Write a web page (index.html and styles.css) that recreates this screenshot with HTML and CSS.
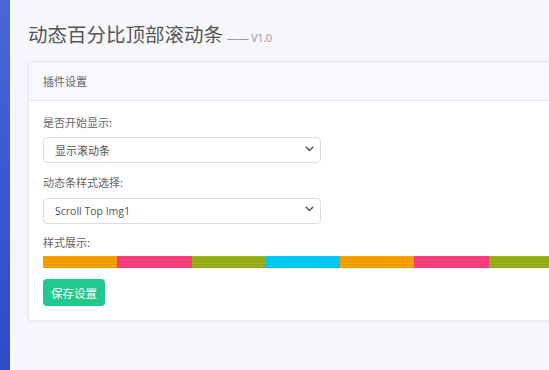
FILE: index.html
```html
<!DOCTYPE html>
<html lang="zh">
<head>
<meta charset="utf-8">
<title>动态百分比顶部滚动条</title>
<link rel="stylesheet" href="styles.css">
</head>
<body>
<div class="layout">
  <aside class="sidebar"></aside>
  <main class="main">
    <h1 class="page-title">动态百分比顶部滚动条<small class="version">—— V1.0</small></h1>
    <section class="card">
      <div class="card-header">插件设置</div>
      <div class="card-body">
        <label class="field-label">是否开始显示:</label>
        <div class="select-wrap">
          <select class="select"><option>显示滚动条</option></select>
          <svg class="chevron" width="9" height="6" viewBox="0 0 9 6"><path d="M1.2 1.2 L4.5 4.5 L7.8 1.2" fill="none" stroke="#5c5c66" stroke-width="1.6" stroke-linecap="round" stroke-linejoin="round"/></svg>
        </div>
        <label class="field-label">动态条样式选择:</label>
        <div class="select-wrap">
          <select class="select latin"><option>Scroll Top Img1</option></select>
          <svg class="chevron" width="9" height="6" viewBox="0 0 9 6"><path d="M1.2 1.2 L4.5 4.5 L7.8 1.2" fill="none" stroke="#5c5c66" stroke-width="1.6" stroke-linecap="round" stroke-linejoin="round"/></svg>
        </div>
        <label class="field-label">样式展示:</label>
        <div class="preview-bar">
          <span class="seg orange"></span><span class="seg pink"></span><span class="seg green"></span><span class="seg cyan"></span><span class="seg orange"></span><span class="seg pink"></span><span class="seg green"></span><span class="seg cyan"></span>
        </div>
        <button class="btn-save">保存设置</button>
      </div>
    </section>
  </main>
</div>
</body>
</html>
```

FILE: styles.css
```css
* { box-sizing: border-box; }
html, body {
  margin: 0;
  padding: 0;
  height: 100%;
}
body {
  background: #f6f7fb;
  font-family: "Noto Sans CJK SC", "Open Sans", sans-serif;
  color: #666;
  overflow: hidden;
}
.layout {
  display: flex;
  height: 370px;
}
.sidebar {
  width: 10px;
  flex: none;
  background: linear-gradient(180deg, #4a66da 0%, #3a57cf 50%, #2d4cc3 100%);
}
.main {
  flex: 1;
  min-width: 0;
  padding: 20px 0 0 18px;
  overflow: hidden;
}
.page-title {
  margin: 0 0 12px 0;
  font-size: 19.5px;
  font-weight: 400;
  line-height: 28px;
  height: 29px;
  color: #555;
  white-space: nowrap;
  font-family: "Noto Sans CJK SC", sans-serif;
}
.version {
  font-size: 11px;
  color: #999;
  margin-left: 4px;
  font-family: "Open Sans", "Noto Sans CJK SC", sans-serif;
  letter-spacing: -0.3px;
}
.card {
  width: 580px;
  background: #fff;
  border: 1px solid #e7e8ef;
  border-radius: 4px;
  box-shadow: 0 1px 3px rgba(30, 40, 90, 0.06);
}
.card-header {
  height: 39px;
  display: flex;
  align-items: center;
  padding: 0 14px;
  background: #f7f8fc;
  border-bottom: 1px solid #e9eaf1;
  border-radius: 4px 4px 0 0;
  font-size: 11px;
  color: #666;
}
.card-body {
  padding: 13px 14px 14px 14px;
  display: flex;
  flex-direction: column;
  align-items: flex-start;
}
.field-label {
  font-size: 11px;
  line-height: 16px;
  color: #666;
  margin-bottom: 6px;
}
.select-wrap {
  position: relative;
  width: 278px;
  height: 26px;
  margin-bottom: 12px;
}
.select {
  appearance: none;
  -webkit-appearance: none;
  width: 100%;
  height: 26px;
  border: 1px solid #dcdbe9;
  border-radius: 4px;
  background: #fff;
  padding: 0 11px;
  font-family: "Noto Sans CJK SC", "Open Sans", sans-serif;
  font-size: 11px;
  color: #555;
  outline: none;
}
.select.latin {
  font-family: "Open Sans", "Noto Sans CJK SC", sans-serif;
  font-size: 10.5px;
}
.chevron {
  position: absolute;
  right: 7px;
  top: 10px;
  pointer-events: none;
}
.preview-bar {
  display: flex;
  width: 560px;
  height: 12px;
  margin-bottom: 11px;
  overflow: hidden;
}
.seg {
  flex: none;
  width: 74.3px;
  height: 12px;
  background-image: repeating-linear-gradient(180deg, rgba(0,0,0,0) 0px, rgba(0,0,0,0) 2px, rgba(0,0,0,0.06) 2px, rgba(0,0,0,0.06) 3px);
}
.seg.orange { background-color: #f7a200; }
.seg.pink { background-color: #f83e7d; }
.seg.green { background-color: #97b11b; }
.seg.cyan { background-color: #00cbf6; }
.btn-save {
  height: 27px;
  padding: 0 8px;
  border: none;
  border-radius: 4px;
  background: #21c98e;
  color: #fff;
  font-family: "Noto Sans CJK SC", sans-serif;
  font-size: 11.5px;
  cursor: pointer;
}
```
